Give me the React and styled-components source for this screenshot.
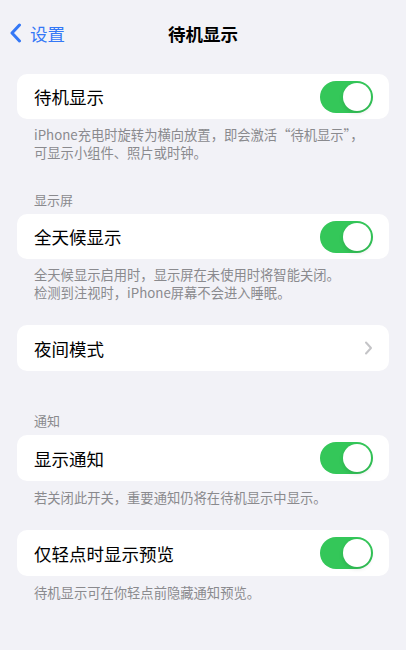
import React from 'react'
import styled, { createGlobalStyle } from 'styled-components';

const GlobalStyle = createGlobalStyle`
  html, body {
    margin: 0;
    padding: 0;
    background: #f2f2f7;
  }
  body {
    font-family: "Noto Sans CJK SC", "Noto Sans", "Liberation Sans", sans-serif;
    -webkit-font-smoothing: antialiased;
  }
`;

const Page = styled.div`
  width: 406px;
  min-height: 650px;
  background: #f2f2f7;
  overflow: hidden;
`;

const NavBar = styled.div`
  height: 66px;
  display: flex;
  align-items: center;
  justify-content: center;
  position: relative;
`;

const BackButton = styled.div`
  position: absolute;
  left: 9px;
  top: 0;
  height: 66px;
  display: flex;
  align-items: center;
  gap: 8px;
  color: #3478f6;
  font-size: 17.5px;
`;

const Title = styled.div`
  font-size: 17.5px;
  font-weight: 600;
  color: #000;
`;

const Section = styled.div`
  margin-top: ${p => p.$top}px;
`;

const Header = styled.div`
  padding: 0 34px 6px;
  font-size: 13px;
  line-height: 17px;
  color: #8a8a8e;
`;

const Card = styled.div`
  margin: 0 17px;
  height: ${p => p.$h || 45}px;
  background: #fff;
  border-radius: 10px;
  display: flex;
  align-items: center;
  justify-content: space-between;
  padding: 0 16px 0 17px;
`;

const Label = styled.span`
  font-size: 17.5px;
  color: #000;
`;

const Footer = styled.div`
  padding: ${p => p.$pad || 7}px 34px 0;
  font-size: 13.3px;
  line-height: 17.5px;
  color: #8a8a8e;
`;

const Toggle = styled.div`
  width: 53px;
  height: 32px;
  border-radius: 16px;
  background: #34c759;
  position: relative;
  flex-shrink: 0;

  &::after {
    content: '';
    position: absolute;
    right: 2px;
    top: 2px;
    width: 28px;
    height: 28px;
    border-radius: 50%;
    background: #fff;
    box-shadow: 0 2px 4px rgba(0, 0, 0, 0.12);
  }
`;

const BackChevron = () => (
  <svg width="13" height="20" viewBox="0 0 13 20">
    <polyline points="10.5,2 3,10 10.5,18" fill="none" stroke="#3478f6" strokeWidth="3" strokeLinecap="round" strokeLinejoin="round" />
  </svg>
);

const Chevron = () => (
  <svg width="9" height="14" viewBox="0 0 9 14">
    <polyline points="2,1.5 7,7 2,12.5" fill="none" stroke="#c4c4c7" strokeWidth="2" strokeLinecap="round" strokeLinejoin="round" />
  </svg>
);

const App = () => {
  return (
    <Page>
      <GlobalStyle />
      <NavBar>
        <BackButton>
          <BackChevron />
          <span>设置</span>
        </BackButton>
        <Title>待机显示</Title>
      </NavBar>

      <Section $top={8}>
        <Card>
          <Label>待机显示</Label>
          <Toggle />
        </Card>
        <Footer>
          iPhone充电时旋转为横向放置，即会激活“待机显示”，<br />
          可显示小组件、照片或时钟。
        </Footer>
      </Section>

      <Section $top={30}>
        <Header>显示屏</Header>
        <Card>
          <Label>全天候显示</Label>
          <Toggle />
        </Card>
        <Footer>
          全天候显示启用时，显示屏在未使用时将智能关闭。<br />
          检测到注视时，iPhone屏幕不会进入睡眠。
        </Footer>
      </Section>

      <Section $top={24}>
        <Card $h={46}>
          <Label>夜间模式</Label>
          <Chevron />
        </Card>
      </Section>

      <Section $top={41}>
        <Header>通知</Header>
        <Card $h={46}>
          <Label>显示通知</Label>
          <Toggle />
        </Card>
        <Footer $pad={8}>若关闭此开关，重要通知仍将在待机显示中显示。</Footer>
      </Section>

      <Section $top={23.5}>
        <Card $h={46}>
          <Label>仅轻点时显示预览</Label>
          <Toggle />
        </Card>
        <Footer $pad={8}>待机显示可在你轻点前隐藏通知预览。</Footer>
      </Section>
    </Page>
  )
}

export default App
